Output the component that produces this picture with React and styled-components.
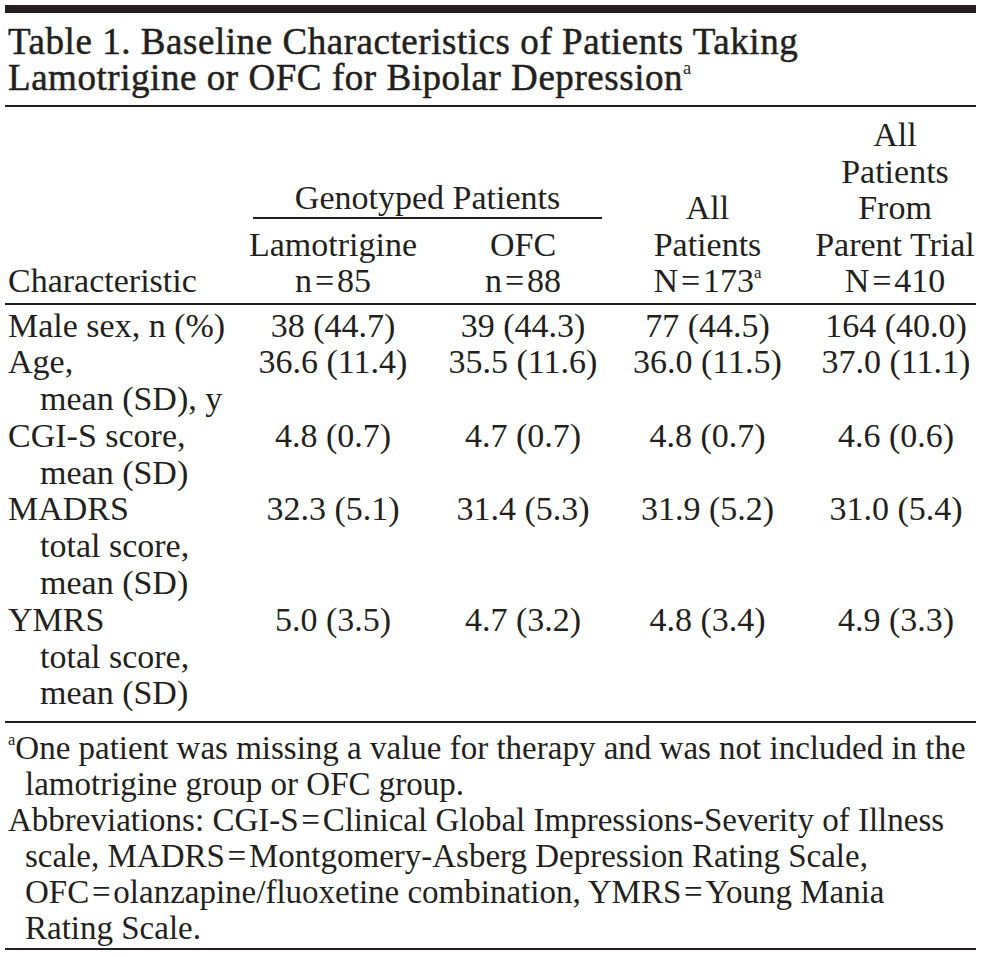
import React from "react";
import styled, { createGlobalStyle } from "styled-components";

const GlobalStyle = createGlobalStyle`
  html, body {
    margin: 0;
    padding: 0;
    background: #fff;
  }
  body {
    font-family: "Liberation Serif", "Times New Roman", serif;
    color: #231f20;
  }
`;

const INK = "#231f20";
const COLUMNS = "240px 176px 204px 165px 1fr";

// Whole table block
const Page = styled.div`
  width: 971px;
  margin: 0 5px;
  padding-top: 5px;
`;

const Rule = styled.div`
  height: ${(p) => p.$weight || 2}px;
  background: ${INK};
`;

const Title = styled.h1`
  margin: 11px 0 9px;
  padding-left: 3px;
  font-size: 37px;
  line-height: 36px;
  font-weight: 400;
  letter-spacing: 0.55px;
  -webkit-text-stroke: 0.5px ${INK};
  white-space: nowrap;
`;

const Sup = styled.sup`
  font-size: 0.5em;
  line-height: 0;
  vertical-align: 0.85em;
  -webkit-text-stroke: 0;
`;

const Header = styled.div`
  display: grid;
  grid-template-columns: ${COLUMNS};
  grid-template-rows: 1fr auto;
  align-items: end;
  padding: 10px 0 3px;
  font-size: 34px;
  line-height: 36.5px;
`;

const HeadLabel = styled.div`
  grid-column: 1;
  grid-row: 1 / 3;
  padding-left: 3px;
`;

const GroupHead = styled.div`
  grid-column: 2 / 4;
  grid-row: 1;
  margin: 0 23px 8px 8px;
  padding-bottom: 1px;
  border-bottom: 2px solid ${INK};
  text-align: center;
  line-height: 36px;
`;

const HeadCell = styled.div`
  grid-column: ${(p) => p.$col};
  grid-row: ${(p) => (p.$span ? "1 / 3" : "2")};
  text-align: center;
  white-space: nowrap;
  padding-left: ${(p) => (p.$last ? "24px" : "0")};
`;

const Body = styled.div`
  padding: 3px 0 9px;
  font-size: 34px;
  line-height: 36.8px;
`;

const DataRow = styled.div`
  display: grid;
  grid-template-columns: ${COLUMNS};
  align-items: start;
`;

const RowLabel = styled.div`
  padding-left: 35px;
  text-indent: -32px;
  white-space: nowrap;
`;

const Value = styled.div`
  text-align: center;
  white-space: nowrap;
  padding-left: ${(p) => (p.$last ? "26px" : "0")};
`;

const Notes = styled.div`
  padding: 7px 0 2px;
  font-size: 33px;
  line-height: 36px;
`;

const Note = styled.p`
  margin: 0;
  padding-left: 20px;
  text-indent: -17px;
  white-space: nowrap;
`;

const NoteMark = styled.sup`
  font-size: 0.5em;
  line-height: 0;
  vertical-align: 0.85em;
`;

const eq = "\u200a=\u200a";

const rows = [
  { label: ["Male sex, n (%)"], values: ["38 (44.7)", "39 (44.3)", "77 (44.5)", "164 (40.0)"] },
  { label: ["Age,", "mean (SD), y"], values: ["36.6 (11.4)", "35.5 (11.6)", "36.0 (11.5)", "37.0 (11.1)"] },
  { label: ["CGI-S score,", "mean (SD)"], values: ["4.8 (0.7)", "4.7 (0.7)", "4.8 (0.7)", "4.6 (0.6)"] },
  { label: ["MADRS", "total score,", "mean (SD)"], values: ["32.3 (5.1)", "31.4 (5.3)", "31.9 (5.2)", "31.0 (5.4)"] },
  { label: ["YMRS", "total score,", "mean (SD)"], values: ["5.0 (3.5)", "4.7 (3.2)", "4.8 (3.4)", "4.9 (3.3)"] },
];

const withBreaks = (lines) =>
  lines.map((line, i) => (
    <React.Fragment key={i}>
      {i > 0 && <br />}
      {line}
    </React.Fragment>
  ));

export default function App() {
  return (
    <>
      <GlobalStyle />
      <Page>
        <Rule $weight={8} />
        <Title>
          Table 1. Baseline Characteristics of Patients Taking
          <br />
          Lamotrigine or OFC for Bipolar Depression<Sup>a</Sup>
        </Title>
        <Rule />

        <Header>
          <HeadLabel>Characteristic</HeadLabel>
          <GroupHead>Genotyped Patients</GroupHead>
          <HeadCell $col={2}>
            Lamotrigine
            <br />
            n{eq}85
          </HeadCell>
          <HeadCell $col={3}>
            OFC
            <br />
            n{eq}88
          </HeadCell>
          <HeadCell $col={4} $span>
            All
            <br />
            Patients
            <br />
            N{eq}173<Sup>a</Sup>
          </HeadCell>
          <HeadCell $col={5} $span $last>
            All
            <br />
            Patients
            <br />
            From
            <br />
            Parent Trial
            <br />
            N{eq}410
          </HeadCell>
        </Header>
        <Rule />

        <Body>
          {rows.map((row) => (
            <DataRow key={row.label[0]}>
              <RowLabel>{withBreaks(row.label)}</RowLabel>
              {row.values.map((v, i) => (
                <Value key={i} $last={i === 3}>
                  {v}
                </Value>
              ))}
            </DataRow>
          ))}
        </Body>
        <Rule />

        <Notes>
          <Note>
            <NoteMark>a</NoteMark>One patient was missing a value for therapy and was not included in the
            <br />
            lamotrigine group or OFC group.
          </Note>
          <Note>
            Abbreviations: CGI-S{eq}Clinical Global Impressions-Severity of Illness
            <br />
            scale, MADRS{eq}Montgomery-Asberg Depression Rating Scale,
            <br />
            OFC{eq}olanzapine/fluoxetine combination, YMRS{eq}Young Mania
            <br />
            Rating Scale.
          </Note>
        </Notes>
        <Rule />
      </Page>
    </>
  );
}
